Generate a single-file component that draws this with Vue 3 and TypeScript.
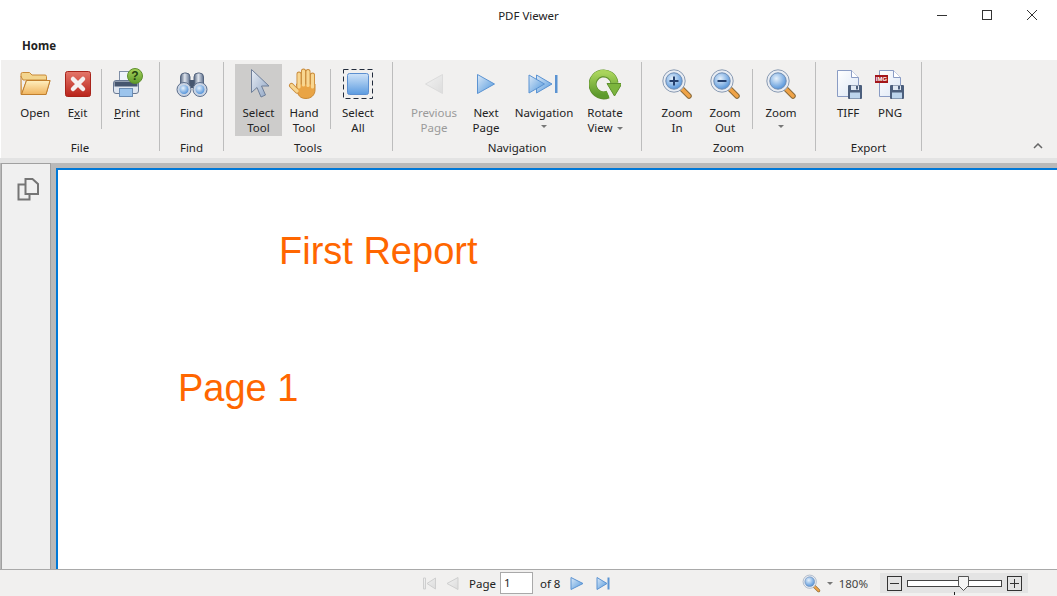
<template>
  <div class="window">
    <!-- shared gradients for the ribbon icons -->
    <svg class="defs" width="0" height="0" aria-hidden="true">
      <defs>
        <linearGradient id="gBlue" x1="0" y1="0" x2="0" y2="1"><stop offset="0" stop-color="#cfe3f8" /><stop offset="1" stop-color="#5b9be0" /></linearGradient>
        <linearGradient id="gArrow" x1="0" y1="0" x2="1" y2="1"><stop offset="0" stop-color="#dce9f7" /><stop offset="1" stop-color="#4f97dd" /></linearGradient>
        <linearGradient id="gGrey" x1="0" y1="0" x2="1" y2="1"><stop offset="0" stop-color="#f2f2f2" /><stop offset="1" stop-color="#dcdcdc" /></linearGradient>
        <linearGradient id="gRed" x1="0" y1="0" x2="0" y2="1"><stop offset="0" stop-color="#e4776a" /><stop offset="1" stop-color="#b9231a" /></linearGradient>
        <linearGradient id="gFolder" x1="0" y1="0" x2="0" y2="1"><stop offset="0" stop-color="#fff0c0" /><stop offset="1" stop-color="#f0b45e" /></linearGradient>
        <linearGradient id="gGreen" x1="0" y1="0" x2="0" y2="1"><stop offset="0" stop-color="#a9d45c" /><stop offset="1" stop-color="#5d9a2c" /></linearGradient>
        <linearGradient id="gBarrel" x1="0" y1="0" x2="1" y2="0"><stop offset="0" stop-color="#55657f" /><stop offset=".45" stop-color="#dfe5ee" /><stop offset="1" stop-color="#5d6f8c" /></linearGradient>
        <linearGradient id="gCursor" x1="0" y1="0" x2="1" y2="1"><stop offset="0" stop-color="#e8edf5" /><stop offset="1" stop-color="#8fa5c4" /></linearGradient>
        <linearGradient id="gPage" x1="0" y1="0" x2="1" y2="1"><stop offset="0" stop-color="#ffffff" /><stop offset="1" stop-color="#dbe6f5" /></linearGradient>
        <radialGradient id="gLens" cx="0.4" cy="0.35" r="0.7"><stop offset="0" stop-color="#e6f1fb" /><stop offset="1" stop-color="#4d8fd8" /></radialGradient>
        <symbol id="lens" viewBox="0 0 32 32">
          <path d="M19.500 19.500 L28 28" stroke="#8a6a3a" stroke-width="5.500" stroke-linecap="round" />
          <path d="M21 21 L28 28" stroke="#f0a347" stroke-width="3.500" stroke-linecap="round" />
          <circle cx="13" cy="13" r="11.200" fill="#e9edf3" stroke="#8a9bb3" stroke-width="1" />
          <circle cx="13" cy="13" r="8.200" fill="url(#gLens)" stroke="#6f8db3" stroke-width="1" />
        </symbol>
        <symbol id="doc" viewBox="0 0 32 32">
          <path d="M5.500 2.500h14l7 7v19h-21z" fill="url(#gPage)" stroke="#8a9cc4" />
          <path d="M19.500 2.500v7h7" fill="#fff" stroke="#8a9cc4" />
          <rect x="16" y="17" width="14" height="14" rx="1" fill="#4c5f7d" />
          <rect x="19" y="17.500" width="8" height="4.500" fill="#dfe8f3" />
          <rect x="24" y="18" width="2" height="3.500" fill="#4c5f7d" />
          <rect x="18" y="24.500" width="10" height="6" fill="#bcd4ec" />
        </symbol>
      </defs>
    </svg>

    <header class="titlebar">
      <span class="title">PDF Viewer</span>
      <div class="controls">
        <svg width="12" height="12" viewBox="0 0 12 12"><path d="M1 6.500h10" stroke="#333" /></svg>
        <svg width="12" height="12" viewBox="0 0 12 12"><rect x="1.500" y="1.500" width="9" height="9" fill="none" stroke="#333" /></svg>
        <svg width="12" height="12" viewBox="0 0 12 12"><path d="M1 1l10 10M11 1L1 11" stroke="#333" /></svg>
      </div>
    </header>

    <nav class="tabs"><span class="tab">Home</span></nav>

    <section class="ribbon">
      <div class="group" style="width: 159px">
        <div class="items" style="padding-left: 11px">
          <div class="btn" style="width: 46px">
            <svg class="icon" viewBox="0 0 32 32">
              <path d="M2 8.500V6q0-1.500 1.500-1.500h7L13 7h13q1.500 0 1.500 1.500V12H4z" fill="#f3d58f" stroke="#c98a38" />
              <path d="M2 8v18.500h25L31 12.500H7.500L3.500 24" fill="url(#gFolder)" stroke="#c07f2e" />
              <path d="M7.500 12.500H31L27 26.500H2.500z" fill="url(#gFolder)" stroke="#c07f2e" />
            </svg>
            <span>Open</span>
          </div>
          <div class="btn" style="width: 39px">
            <svg class="icon" viewBox="0 0 32 32">
              <rect x="3.500" y="3.500" width="25" height="25" rx="2" fill="url(#gRed)" stroke="#a8241b" />
              <path d="M11 11l10 10M21 11L11 21" stroke="#f4f0f0" stroke-width="4.500" stroke-linecap="round" />
            </svg>
            <span>E<u>x</u>it</span>
          </div>
          <i class="sep" />
          <div class="btn" style="width: 40px">
            <svg class="icon" viewBox="0 0 32 32">
              <rect x="8.500" y="3.500" width="14" height="11" fill="#eef3fa" stroke="#7f8ea6" />
              <rect x="2.500" y="12.500" width="25" height="13" rx="2.500" fill="#dfe6f0" stroke="#6a7a94" />
              <rect x="3.500" y="13.500" width="23" height="5" fill="#46566f" />
              <rect x="8.500" y="20.500" width="13" height="8" fill="#9cc4ec" stroke="#6a8cb4" />
              <circle cx="24" cy="8" r="7.500" fill="url(#gGreen)" stroke="#5d8f2c" />
              <text x="24" y="12" class="mark">?</text>
            </svg>
            <span><u>P</u>rint</span>
          </div>
        </div>
        <div class="caption">File</div>
      </div>

      <div class="group" style="width: 64px">
        <div class="items">
          <div class="btn" style="width: 63px">
            <svg class="icon" viewBox="0 0 32 32">
              <rect x="4.500" y="5" width="9.500" height="15" rx="4" fill="url(#gBarrel)" stroke="#55657f" />
              <rect x="18" y="5" width="9.500" height="15" rx="4" fill="url(#gBarrel)" stroke="#55657f" />
              <rect x="13.500" y="12" width="5" height="8" fill="#46566f" />
              <circle cx="8" cy="21.500" r="7" fill="#c9d4e4" stroke="#5d6f8c" />
              <circle cx="24" cy="21.500" r="7" fill="#c9d4e4" stroke="#5d6f8c" />
              <circle cx="8" cy="21.500" r="4.500" fill="url(#gLens)" />
              <circle cx="24" cy="21.500" r="4.500" fill="url(#gLens)" />
            </svg>
            <span>Find</span>
          </div>
        </div>
        <div class="caption">Find</div>
      </div>

      <div class="group" style="width: 169px">
        <div class="items" style="padding-left: 11px">
          <div class="btn active" style="width: 47px">
            <svg class="icon" viewBox="0 0 32 32">
              <path d="M8.500 1.500v23l5.500-5 4 9.500 4.500-2-4-9h7.500z" fill="url(#gCursor)" stroke="#6f7f99" />
            </svg>
            <span>Select<br />Tool</span>
          </div>
          <div class="btn" style="width: 44px">
            <svg class="icon" viewBox="0 0 32 32">
              <g fill="none" stroke="#c98a38" stroke-width="5" stroke-linecap="round">
                <path d="M3.500 17.500 9 23M11 6v12M15.500 3v14M20 3.500v14M24.500 7v12" />
              </g>
              <path d="M8.500 16h18.500v6c0 5-4 8.500-9 8.500-4 0-6.500-1.500-8-4.500z" fill="#e9a445" stroke="#c98a38" />
              <g fill="none" stroke="#f8d690" stroke-width="3.200" stroke-linecap="round">
                <path d="M3.500 17.500 9 23M11 6v13M15.500 3v14M20 3.500v14M24.500 7v12" />
              </g>
            </svg>
            <span>Hand<br />Tool</span>
          </div>
          <i class="sep" />
          <div class="btn" style="width: 44px">
            <svg class="icon" viewBox="0 0 32 32">
              <rect x="1.500" y="1.500" width="29" height="29" fill="none" stroke="#222c3c" stroke-dasharray="5 3" />
              <rect x="5.500" y="5.500" width="21" height="21" rx="2" fill="url(#gBlue)" stroke="#5c8fd0" />
            </svg>
            <span>Select<br />All</span>
          </div>
        </div>
        <div class="caption">Tools</div>
      </div>

      <div class="group" style="width: 249px">
        <div class="items" style="padding-left: 15px">
          <div class="btn off" style="width: 52px">
            <svg class="icon" viewBox="0 0 32 32">
              <path d="M24.500 6.500v19L7.500 16z" fill="url(#gGrey)" stroke="#dcdcdc" />
            </svg>
            <span>Previous<br />Page</span>
          </div>
          <div class="btn" style="width: 52px">
            <svg class="icon" viewBox="0 0 32 32">
              <path d="M7.500 6.500v19L24.500 16z" fill="url(#gArrow)" stroke="#5b93d2" />
            </svg>
            <span>Next<br />Page</span>
          </div>
          <div class="btn" style="width: 64px">
            <svg class="icon" viewBox="0 0 32 32">
              <path d="M8.500 7v18L24 16z" fill="url(#gArrow)" stroke="#5b93d2" />
              <path d="M1 7v18L16.500 16z" fill="url(#gArrow)" stroke="#5b93d2" />
              <rect x="27" y="7" width="2.500" height="18" fill="#5b93d2" />
            </svg>
            <span>Navigation</span>
            <b class="caret" />
          </div>
          <div class="btn" style="width: 58px">
            <svg class="icon" viewBox="0 0 32 32">
              <path d="M19 26.500A11 11 0 1 1 25.500 15" fill="none" stroke="#5d8f2c" stroke-width="8" />
              <path d="M19 26A11 11 0 1 1 25.500 15" fill="none" stroke="url(#gGreen)" stroke-width="6.400" />
              <path d="M18 15.500h15L25.500 28z" fill="#7cb53e" stroke="#5d8f2c" />
            </svg>
            <span>Rotate<br />View<b class="caret inline" /></span>
          </div>
        </div>
        <div class="caption">Navigation</div>
      </div>

      <div class="group" style="width: 174px">
        <div class="items" style="padding-left: 11px">
          <div class="btn" style="width: 48px">
            <svg class="icon" viewBox="0 0 32 32">
              <use href="#lens" />
              <path d="M13 8.500v9M8.500 13h9" stroke="#24406e" stroke-width="2" />
            </svg>
            <span>Zoom<br />In</span>
          </div>
          <div class="btn" style="width: 48px">
            <svg class="icon" viewBox="0 0 32 32">
              <use href="#lens" />
              <path d="M8.500 13h9" stroke="#24406e" stroke-width="2" />
            </svg>
            <span>Zoom<br />Out</span>
          </div>
          <i class="sep narrow" />
          <div class="btn" style="width: 52px">
            <svg class="icon" viewBox="0 0 32 32"><use href="#lens" /></svg>
            <span>Zoom</span>
            <b class="caret" />
          </div>
        </div>
        <div class="caption">Zoom</div>
      </div>

      <div class="group" style="width: 106px">
        <div class="items" style="padding-left: 11px">
          <div class="btn" style="width: 42px">
            <svg class="icon" viewBox="0 0 32 32"><use href="#doc" /></svg>
            <span>TIFF</span>
          </div>
          <div class="btn" style="width: 42px">
            <svg class="icon" viewBox="0 0 32 32">
              <use href="#doc" />
              <rect x="1" y="7" width="13" height="8" fill="#a3161a" />
              <text x="7.500" y="13" class="badge">IMG</text>
            </svg>
            <span>PNG</span>
          </div>
        </div>
        <div class="caption">Export</div>
      </div>

      <svg class="collapse" width="10" height="6" viewBox="0 0 10 6"><path d="M1 5l4-4 4 4" fill="none" stroke="#666" stroke-width="1.500" /></svg>
    </section>
    <div class="ribbon-edge"></div>

    <main class="body">
      <aside class="side">
        <svg width="24" height="24" viewBox="0 0 24 24">
          <path d="M8.500 7.500H1.500v15h11V17" fill="none" stroke="#757575" stroke-width="2" />
          <path d="M8.500 2h7l5.500 5v10H8.500z" fill="#f0f0f0" stroke="#757575" stroke-width="2" />
        </svg>
      </aside>
      <div class="gutter"></div>
      <div class="page">
        <div class="report">First Report</div>
        <div class="pageno">Page 1</div>
      </div>
    </main>

    <footer class="status">
      <div class="pager">
        <svg width="15" height="15" viewBox="0 0 15 15"><path d="M1.500 2v11h2V2zM13.500 2v11L5 7.500z" fill="url(#gGrey)" stroke="#cfcfcf" /></svg>
        <svg class="pprev" width="13" height="15" viewBox="0 0 13 15"><path d="M12 1.500v12L1 7.500z" fill="url(#gGrey)" stroke="#cfcfcf" /></svg>
        <span class="plabel">Page</span>
        <span class="pinput">1</span>
        <span class="pof">of 8</span>
        <svg class="pnext" width="14" height="15" viewBox="0 0 14 15"><path d="M1 1.500v12L13 7.500z" fill="url(#gArrow)" stroke="#5b93d2" /></svg>
        <svg class="plast" width="15" height="15" viewBox="0 0 15 15"><path d="M1 1.500v12L11 7.500z" fill="url(#gArrow)" stroke="#5b93d2" /><rect x="11.500" y="1.500" width="2" height="12" fill="#5b93d2" /></svg>
      </div>
      <div class="zoombox">
        <svg width="19" height="19" viewBox="0 0 32 32"><use href="#lens" /></svg>
        <b class="caret small" />
        <span class="percent">180%</span>
        <div class="slider">
          <span class="sbtn"><svg width="15" height="15" viewBox="0 0 15 15"><rect x=".5" y=".5" width="14" height="14" fill="none" stroke="#333" /><path d="M3 7.500h9" stroke="#333" /></svg></span>
          <div class="track">
            <svg class="thumb" width="11" height="15" viewBox="0 0 11 15"><path d="M.5.500h10v9l-5 5-5-5z" fill="#f4f4f4" stroke="#555" /></svg>
            <i class="tick" />
          </div>
          <span class="sbtn"><svg width="15" height="15" viewBox="0 0 15 15"><rect x=".5" y=".5" width="14" height="14" fill="none" stroke="#333" /><path d="M3 7.500h9M7.500 3v9" stroke="#333" /></svg></span>
        </div>
      </div>
    </footer>
  </div>
</template>

<script setup lang="ts">
// static mock of the viewer chrome, nothing to wire up
</script>

<style>
html,
body {
  margin: 0;
  background: #fff;
}
</style>

<style scoped>
.window {
  width: 1057px;
  height: 596px;
  display: flex;
  flex-direction: column;
  overflow: hidden;
  font-family: "Noto Sans", "Open Sans", sans-serif;
  font-size: 11.5px;
  color: #222;
  background: #fff;
}
.defs {
  position: absolute;
}
.titlebar {
  height: 30px;
  flex: none;
  display: flex;
  align-items: center;
  justify-content: center;
  position: relative;
}
.title {
  font-size: 11.5px;
}
.controls {
  position: absolute;
  top: 9px;
  left: 936px;
  display: flex;
  gap: 33px;
}
.tabs {
  height: 30px;
  flex: none;
  display: flex;
  align-items: center;
  padding-left: 22px;
}
.tab {
  font-weight: 700;
}
.ribbon {
  height: 98px;
  flex: none;
  margin-left: 1px;
  padding-top: 2px;
  box-sizing: border-box;
  display: flex;
  background: #f1f0ef;
  position: relative;
}
.group {
  height: 89px;
  box-sizing: border-box;
  border-right: 1px solid #bdbdbd;
  padding-top: 2px;
  display: flex;
  flex-direction: column;
}
.items {
  display: flex;
  flex: none;
  height: 72px;
}
.caption {
  margin-top: 4px;
  line-height: 15px;
  text-align: center;
}
.btn {
  flex: none;
  box-sizing: border-box;
  padding-top: 4px;
  display: flex;
  flex-direction: column;
  align-items: center;
  text-align: center;
  line-height: 15px;
}
.btn.active {
  background: #cdcccb;
}
.btn.off {
  color: #9a9a9a;
}
.icon {
  width: 32px;
  height: 32px;
  margin-bottom: 5px;
  flex: none;
}
.sep {
  flex: none;
  width: 1px;
  height: 60px;
  margin: 5px 5px 0 4px;
  background: #bdbdbd;
}
.sep.narrow {
  margin: 5px 2px 0 3px;
}
.caret {
  display: block;
  width: 0;
  height: 0;
  margin-top: 5px;
  border-left: 3px solid transparent;
  border-right: 3px solid transparent;
  border-top: 3px solid #777;
}
.caret.inline {
  display: inline-block;
  margin: 0 0 2px 4px;
}
.caret.small {
  margin: 0 0 0 6px;
}
.mark {
  font-family: "Liberation Sans", sans-serif;
  font-weight: 700;
  font-size: 12px;
  text-anchor: middle;
  fill: #23400f;
}
.badge {
  font-family: "Liberation Sans", sans-serif;
  font-weight: 700;
  font-size: 6px;
  text-anchor: middle;
  fill: #fff;
}
.collapse {
  position: absolute;
  left: 1032px;
  top: 83px;
}
.ribbon-edge {
  height: 5px;
  flex: none;
  background: #e3e3e3;
}
.body {
  flex: 1;
  min-height: 0;
  display: flex;
  background: #b9b9b9;
  border-bottom: 1px solid #a9a9a9;
}
.side {
  width: 50px;
  margin-left: 1px;
  box-sizing: border-box;
  border-left: 1px solid #a0a0a0;
  border-right: 1px solid #a0a0a0;
  border-top: 1px solid #a0a0a0;
  background: #f0f0f0;
  display: flex;
  justify-content: center;
  padding: 13px 0 0 6px;
}
.gutter {
  width: 5px;
  flex: none;
}
.page {
  flex: 1;
  margin-top: 5px;
  background: #fff;
  border-left: 2px solid #0078d7;
  border-top: 2px solid #0078d7;
  color: #ff6600;
  font-family: "Liberation Sans", Arial, sans-serif;
  font-size: 38px;
  line-height: 44px;
}
.report {
  margin: 59px 0 0 221px;
}
.pageno {
  margin: 93px 0 0 120px;
}
.status {
  height: 26px;
  flex: none;
  background: #f1f0ef;
  display: flex;
  align-items: center;
}
.pager {
  margin-left: 422px;
  display: flex;
  align-items: center;
}
.pprev {
  margin-left: 9px;
}
.plabel {
  margin-left: 10px;
}
.pinput {
  width: 33px;
  height: 22px;
  margin-left: 4px;
  box-sizing: border-box;
  border: 1px solid #a9a9a9;
  background: #fff;
  line-height: 20px;
  padding-left: 3px;
}
.pof {
  margin-left: 7px;
}
.pnext {
  margin-left: 10px;
}
.plast {
  margin-left: 12px;
}
.zoombox {
  margin-left: auto;
  margin-right: 29px;
  display: flex;
  align-items: center;
}
.percent {
  margin-left: 6px;
  color: #444;
}
.slider {
  width: 148px;
  height: 20px;
  margin-left: 12px;
  box-sizing: border-box;
  padding: 0 6px 0 7px;
  background: #e4e4e4;
  display: flex;
  align-items: center;
  justify-content: space-between;
}
.sbtn {
  display: flex;
}
.track {
  width: 95px;
  height: 7px;
  box-sizing: border-box;
  border: 1px solid #444;
  background: #fff;
  position: relative;
}
.thumb {
  position: absolute;
  left: 50px;
  top: -5px;
}
.tick {
  position: absolute;
  left: 46px;
  top: 11px;
  width: 1px;
  height: 3px;
  background: #222;
}
</style>
